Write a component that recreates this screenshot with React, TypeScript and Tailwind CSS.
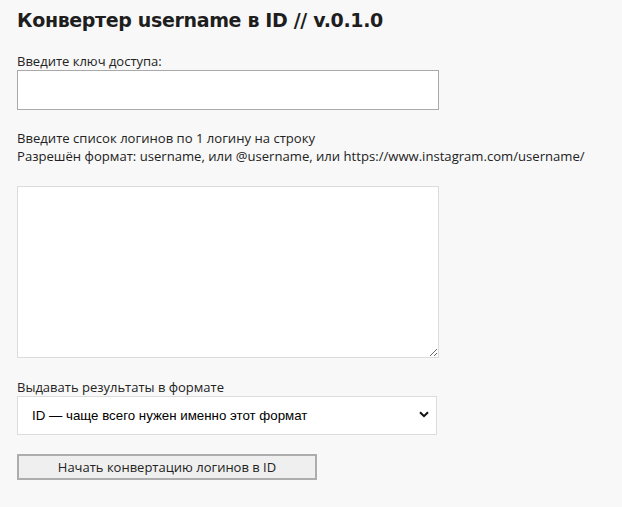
import { useState } from "react";

export default function App() {
  const [key, setKey] = useState("");
  const [logins, setLogins] = useState("");
  const [format, setFormat] = useState("id");

  return (
    <div className="min-h-[507px] bg-[#f8f8f8] px-[17px] pt-[7px] text-[13px] text-[#222] font-['Open_Sans',sans-serif]">
      <h1 className="text-[19px] leading-[26px] font-bold tracking-[-0.35px] text-[#1e1e1e] font-['DejaVu_Sans',sans-serif]">
        Конвертер username в ID // v.0.1.0
      </h1>

      <label className="mt-[19px] block leading-[18px]">Введите ключ доступа:</label>
      <input
        value={key}
        onChange={(e) => setKey(e.target.value)}
        className="block w-[422px] h-[40px] bg-white border border-[#a9a9a9] px-2 outline-none"
      />

      <p className="mt-[19px] leading-[18px] text-[13.1px]">
        Введите список логинов по 1 логину на строку
        <br />
        Разрешён формат: username, или @username, или https://www.instagram.com/username/
      </p>

      <textarea
        value={logins}
        onChange={(e) => setLogins(e.target.value)}
        className="mt-[21px] block w-[422px] h-[172px] bg-white border border-[#dcdcdc] p-2 outline-none"
      />

      <label className="mt-[20px] block leading-[18px]">Выдавать результаты в формате</label>
      <div className="relative w-[420px]">
        <select
          value={format}
          onChange={(e) => setFormat(e.target.value)}
          className="block w-full h-[39px] appearance-none bg-white border border-[#dcdcdc] pl-[14px] text-[13.3px] text-black font-['Liberation_Sans',sans-serif] outline-none"
        >
          <option value="id">ID — чаще всего нужен именно этот формат</option>
          <option value="username">username — ID</option>
        </select>
        <svg
          className="pointer-events-none absolute right-[8px] top-[15px]"
          width="10"
          height="7"
          viewBox="0 0 10 7"
        >
          <path d="M1 1.2 5 5.2 9 1.2" fill="none" stroke="#111" strokeWidth="2" />
        </svg>
      </div>

      <button className="mt-[19px] block w-[300px] h-[26px] bg-[#efefef] border-2 border-[#adadad] text-[#222] text-[13px] leading-none">
        Начать конвертацию логинов в ID
      </button>
    </div>
  );
}
